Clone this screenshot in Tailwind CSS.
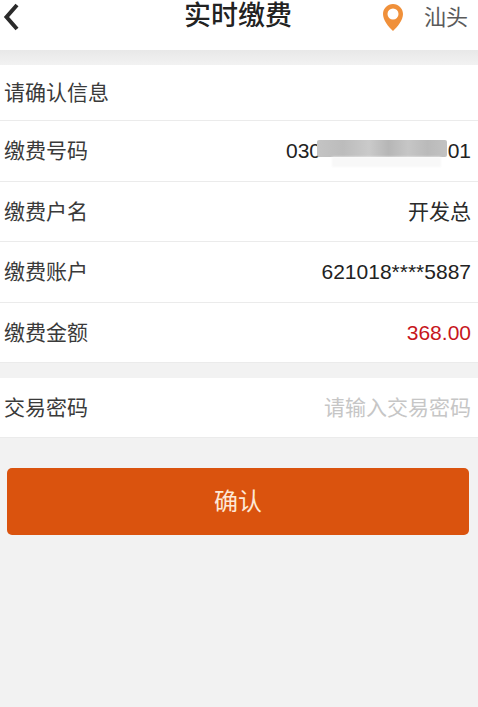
<!DOCTYPE html>
<html lang="zh-CN">
<head>
    <meta charset="UTF-8">
    <title>实时缴费</title>
    <script src="https://cdn.jsdelivr.net/npm/@tailwindcss/browser@4"></script>
</head>
<body class="bg-[#f2f2f2] h-[707px] w-[478px] overflow-hidden font-['Liberation_Sans','Noto_Sans_CJK_SC',sans-serif] text-[21px] text-[#3a3a3a]">

    <!-- Header -->
    <header class="h-[50px] bg-white flex items-center relative">
        <svg class="ml-[3px] w-[16px] h-[28px] -mt-[16px]" viewBox="0 0 16 28" fill="none" stroke="#2a2a2a" stroke-width="4">
            <path d="M14 2 L3.500 14 L14 26"/>
        </svg>
        <h1 class="absolute left-[184px] top-[-2px] text-[27px] leading-[36px] font-medium text-[#222]">实时缴费</h1>
        <div class="ml-auto flex items-center -mt-[16px] pr-[10px]">
            <svg class="w-[20px] h-[27px] mr-[21px]" viewBox="0 0 20 27">
                <path fill-rule="evenodd" fill="#f0903a" d="M10 0C4.500 0 0 4.500 0 10c0 6 5.500 13 10 17 4.500-4 10-11 10-17C20 4.500 15.500 0 10 0zm0 4.500a5.500 5.500 0 1 1 0 11 5.500 5.500 0 0 1 0-11z"/>
            </svg>
            <span class="text-[22px] text-[#5a5a5a]">汕头</span>
        </div>
    </header>
    <div class="h-[15px] bg-gradient-to-b from-[#e8e8e8] to-[#f2f2f2]"></div>

    <!-- Info rows -->
    <section class="bg-white">
        <div class="h-[56px] flex items-center px-[4px] border-b border-[#ebebeb]">请确认信息</div>
        <div class="h-[60.500px] flex items-center justify-between pl-[4px] pr-[7px] border-b border-[#ebebeb]">
            <span>缴费号码</span>
            <span class="relative text-[#222] w-[185px] flex justify-between">
                <span>030</span><span>01</span>
                <!-- blurred out part of the number -->
                <span class="absolute left-[31px] right-[24px] top-[5px] h-[17px] rounded-[2px] blur-[0.5px] bg-[linear-gradient(to_right,#c4c4c4,#bcbcbc_20%,#cacaca_40%,#b6b6b6_55%,#c6c6c6_70%,#bababa_85%,#c2c2c2)]"></span>
                <span class="absolute left-[46px] right-[30px] top-[22px] h-[10px] bg-[#f8f8f8] blur-[1px]"></span>
            </span>
        </div>
        <div class="h-[60.500px] flex items-center justify-between pl-[4px] pr-[7px] border-b border-[#ebebeb]">
            <span>缴费户名</span><span class="text-[#2a2a2a]">开发总</span>
        </div>
        <div class="h-[60.500px] flex items-center justify-between pl-[4px] pr-[7px] border-b border-[#ebebeb]">
            <span>缴费账户</span><span class="text-[#222]">621018****5887</span>
        </div>
        <div class="h-[60.500px] flex items-center justify-between pl-[4px] pr-[7px] border-b border-[#ebebeb]">
            <span>缴费金额</span><span class="text-[#c7161c]">368.00</span>
        </div>
    </section>

    <!-- Password -->
    <section class="mt-[15px] bg-white h-[60px] flex items-center justify-between pl-[4px] pr-[7px] border-b border-[#ebebeb]">
        <span>交易密码</span><span class="text-[#c6c6c6]">请输入交易密码</span>
    </section>

    <button class="mt-[30px] mx-[7px] w-[462px] h-[67px] rounded-[5px] bg-[#da530e] text-[#fde8d6] text-[24px] block">确认</button>
</body>
</html>
